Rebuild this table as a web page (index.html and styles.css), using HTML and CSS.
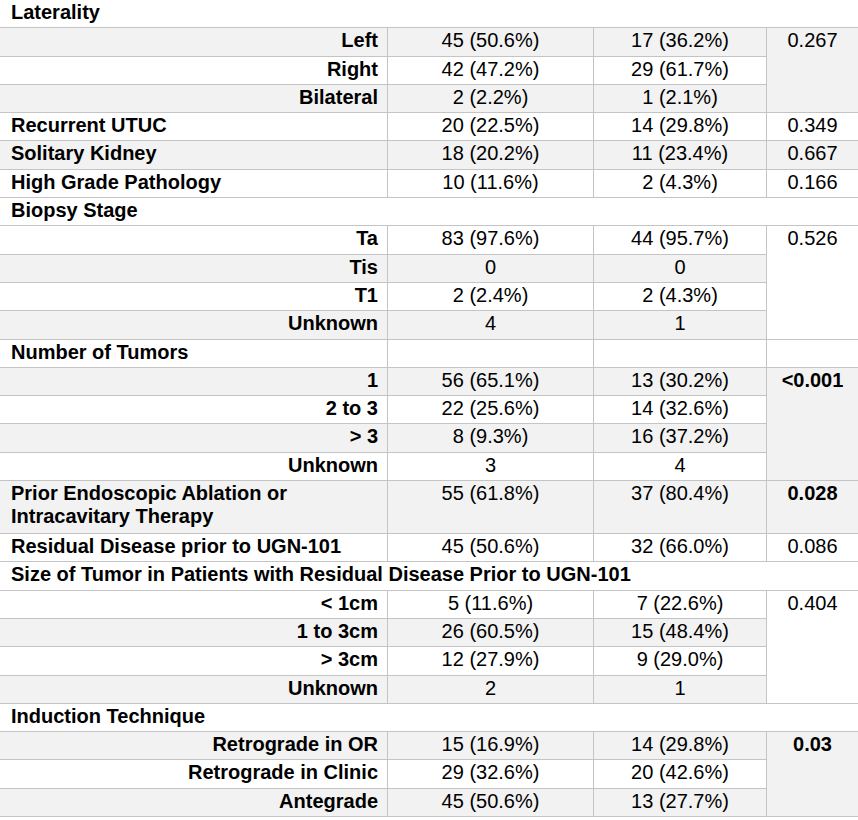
FILE: index.html
```html
<!DOCTYPE html>
<html>
<head>
<meta charset="utf-8">
<link rel="stylesheet" href="styles.css">
</head>
<body>
<table class="tbl">
  <colgroup>
    <col class="c1"><col class="c2"><col class="c3"><col class="c4">
  </colgroup>
  <tbody>
    <tr class="head"><td colspan="4" class="lbl">Laterality</td></tr>
    <tr class="g"><td class="sub">Left</td><td>45 (50.6%)</td><td>17 (36.2%)</td><td rowspan="3" class="p">0.267</td></tr>
    <tr><td class="sub">Right</td><td>42 (47.2%)</td><td>29 (61.7%)</td></tr>
    <tr class="g"><td class="sub">Bilateral</td><td>2 (2.2%)</td><td>1 (2.1%)</td></tr>
    <tr><td class="lbl">Recurrent UTUC</td><td>20 (22.5%)</td><td>14 (29.8%)</td><td class="p">0.349</td></tr>
    <tr class="g"><td class="lbl">Solitary Kidney</td><td>18 (20.2%)</td><td>11 (23.4%)</td><td class="p">0.667</td></tr>
    <tr><td class="lbl">High Grade Pathology</td><td>10 (11.6%)</td><td>2 (4.3%)</td><td class="p">0.166</td></tr>
    <tr class="head"><td colspan="4" class="lbl">Biopsy Stage</td></tr>
    <tr><td class="sub">Ta</td><td>83 (97.6%)</td><td>44 (95.7%)</td><td rowspan="4" class="p">0.526</td></tr>
    <tr class="g"><td class="sub">Tis</td><td>0</td><td>0</td></tr>
    <tr><td class="sub">T1</td><td>2 (2.4%)</td><td>2 (4.3%)</td></tr>
    <tr class="g"><td class="sub">Unknown</td><td>4</td><td>1</td></tr>
    <tr><td class="lbl">Number of Tumors</td><td></td><td></td><td></td></tr>
    <tr class="g"><td class="sub">1</td><td>56 (65.1%)</td><td>13 (30.2%)</td><td rowspan="4" class="p b">&lt;0.001</td></tr>
    <tr><td class="sub">2 to 3</td><td>22 (25.6%)</td><td>14 (32.6%)</td></tr>
    <tr class="g"><td class="sub">&gt; 3</td><td>8 (9.3%)</td><td>16 (37.2%)</td></tr>
    <tr><td class="sub">Unknown</td><td>3</td><td>4</td></tr>
    <tr class="g tall"><td class="lbl">Prior Endoscopic Ablation or<br>Intracavitary Therapy</td><td>55 (61.8%)</td><td>37 (80.4%)</td><td class="p b">0.028</td></tr>
    <tr><td class="lbl">Residual Disease prior to UGN-101</td><td>45 (50.6%)</td><td>32 (66.0%)</td><td class="p">0.086</td></tr>
    <tr class="head"><td colspan="4" class="lbl">Size of Tumor in Patients with Residual Disease Prior to UGN-101</td></tr>
    <tr><td class="sub">&lt; 1cm</td><td>5 (11.6%)</td><td>7 (22.6%)</td><td rowspan="4" class="p">0.404</td></tr>
    <tr class="g"><td class="sub">1 to 3cm</td><td>26 (60.5%)</td><td>15 (48.4%)</td></tr>
    <tr><td class="sub">&gt; 3cm</td><td>12 (27.9%)</td><td>9 (29.0%)</td></tr>
    <tr class="g"><td class="sub">Unknown</td><td>2</td><td>1</td></tr>
    <tr class="head"><td colspan="4" class="lbl">Induction Technique</td></tr>
    <tr class="g"><td class="sub">Retrograde in OR</td><td>15 (16.9%)</td><td>14 (29.8%)</td><td rowspan="3" class="p b">0.03</td></tr>
    <tr><td class="sub">Retrograde in Clinic</td><td>29 (32.6%)</td><td>20 (42.6%)</td></tr>
    <tr class="g"><td class="sub">Antegrade</td><td>45 (50.6%)</td><td>13 (27.7%)</td></tr>
  </tbody>
</table>
</body>
</html>
```
FILE: styles.css
```css
html, body {
  margin: 0;
  padding: 0;
  background: #ffffff;
}
.tbl {
  border-collapse: collapse;
  table-layout: fixed;
  width: 859px;
  margin: -1px 0 0 -1px;
  font-family: "Liberation Sans", Arial, sans-serif;
  font-size: 20px;
  color: #000000;
}
.c1 { width: 388px; }
.c2 { width: 206px; }
.c3 { width: 173px; }
.c4 { width: 92px; }
.tbl tr { height: 28.3px; }
.tbl tr.tall { height: 53px; }
.tbl td {
  border: 1px solid #c4c4c4;
  padding: 1px 9px 0 9px;
  vertical-align: top;
  text-align: center;
  line-height: 23px;
  background: #ffffff;
}
.tbl tr.g td { background: #f2f2f2; }
.tbl td.lbl {
  text-align: left;
  font-weight: bold;
  padding-left: 11px;
}
.tbl td.sub {
  text-align: right;
  font-weight: bold;
}
.tbl td.b { font-weight: bold; }
```
